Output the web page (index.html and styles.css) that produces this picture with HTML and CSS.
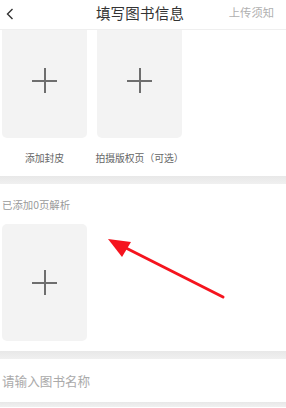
FILE: index.html
```html
<!DOCTYPE html>
<html lang="zh">
<head>
<meta charset="utf-8">
<link rel="stylesheet" href="styles.css">
</head>
<body>
<div class="page">
  <header class="header">
    <div class="back">
      <svg width="10" height="12" viewBox="0 0 10 12"><path d="M7.5 1 L2.5 6 L7.5 11" fill="none" stroke="#333" stroke-width="1.4"/></svg>
    </div>
    <div class="title">填写图书信息</div>
    <div class="notice">上传须知</div>
  </header>

  <section class="covers">
    <div class="item">
      <div class="card card-top"><span class="plus"></span></div>
      <div class="label">添加封皮</div>
    </div>
    <div class="item">
      <div class="card card-top"><span class="plus"></span></div>
      <div class="label">拍摄版权页（可选）</div>
    </div>
  </section>

  <div class="band"></div>

  <section class="pages">
    <div class="count">已添加0页解析</div>
    <div class="card card-page"><span class="plus"></span></div>
  </section>

  <div class="band"></div>

  <div class="input-row">请输入图书名称</div>

  <div class="band band-last"></div>

  <svg class="arrow" width="286" height="408" viewBox="0 0 286 408">
    <line x1="223" y1="297" x2="122" y2="246" stroke="#f5141e" stroke-width="3" stroke-linecap="round"/>
    <polygon points="108,239 131,242 122,257" fill="#f5141e"/>
  </svg>
</div>
</body>
</html>
```

FILE: styles.css
```css
html, body {
  margin: 0;
  padding: 0;
  background: #fff;
}
body {
  font-family: "Noto Sans CJK SC", "Noto Sans", sans-serif;
  width: 286px;
  height: 408px;
  overflow: hidden;
}
.page {
  position: relative;
  width: 286px;
  height: 408px;
}
.header {
  height: 29px;
  border-bottom: 1px solid #efefef;
  display: grid;
  grid-template-columns: 1fr auto 1fr;
  align-items: center;
}
.back {
  padding-left: 5px;
  display: flex;
  align-items: center;
  padding-bottom: 2px;
}
.title {
  font-size: 14.5px;
  color: #333;
  margin-right: 6px;
  padding-bottom: 5px;
  letter-spacing: 0.2px;
}
.notice {
  justify-self: end;
  padding-right: 12px;
  font-size: 11.3px;
  color: #b0b0b0;
  padding-bottom: 5px;
}
.covers {
  display: flex;
  gap: 10px;
  padding-left: 2px;
  height: 146px;
}
.item {
  display: flex;
  flex-direction: column;
  align-items: center;
  width: 85px;
}
.card {
  background: #f3f3f3;
  border-radius: 0 0 5px 5px;
  display: flex;
  align-items: center;
  justify-content: center;
  width: 85px;
}
.card-top {
  height: 108px;
  padding-bottom: 7px;
  box-sizing: border-box;
}
.card-page {
  height: 117px;
  border-radius: 5px;
  margin-top: 12px;
}
.plus {
  position: relative;
  width: 25px;
  height: 25px;
}
.plus::before, .plus::after {
  content: "";
  position: absolute;
  background: #6e6e6e;
}
.plus::before {
  left: 0;
  right: 0;
  top: 12px;
  height: 1.5px;
}
.plus::after {
  top: 0;
  bottom: 0;
  left: 12px;
  width: 1.5px;
}
.label {
  margin-top: 13px;
  font-size: 9.8px;
  line-height: 14px;
  color: #666;
  white-space: nowrap;
}
.band {
  height: 8px;
  background: linear-gradient(#e8e8e8, #f0f0f0);
}
.band-last {
  height: 5px;
}
.pages {
  padding: 13px 0 10px 2px;
}
.count {
  font-size: 10.4px;
  line-height: 15px;
  color: #9a9a9a;
}
.input-row {
  height: 43px;
  display: flex;
  align-items: center;
  padding-left: 2px;
  font-size: 12.6px;
  color: #aaa;
}
.arrow {
  position: absolute;
  left: 0;
  top: 0;
  pointer-events: none;
}
```
